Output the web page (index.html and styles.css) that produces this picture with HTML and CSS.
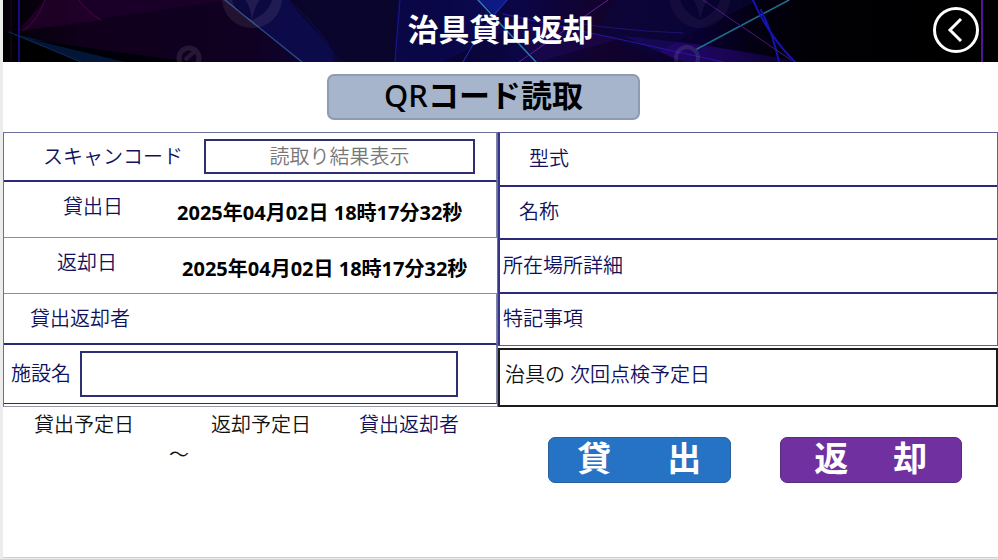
FILE: index.html
```html
<!DOCTYPE html>
<html lang="ja">
<head>
    <meta charset="UTF-8">
    <meta name="viewport" content="width=device-width, initial-scale=1.0">
    <title>治具貸出返却</title>
    <link rel="stylesheet" href="styles.css">
</head>
<body>

<div class="screen">
    <header class="header">
        <svg class="header-art" viewBox="0 0 995 62" preserveAspectRatio="none" aria-hidden="true">
            <defs>
                <linearGradient id="night" x1="0" x2="1" y1="0" y2="0">
                    <stop offset="0" stop-color="#020004"/>
                    <stop offset="0.08" stop-color="#10001c"/>
                    <stop offset="0.25" stop-color="#100022"/>
                    <stop offset="0.34" stop-color="#0b0838"/>
                    <stop offset="0.42" stop-color="#08032c"/>
                    <stop offset="0.52" stop-color="#0b0646"/>
                    <stop offset="0.6" stop-color="#12022c"/>
                    <stop offset="0.7" stop-color="#080030"/>
                    <stop offset="0.76" stop-color="#030010"/>
                    <stop offset="0.82" stop-color="#010004"/>
                    <stop offset="1" stop-color="#000000"/>
                </linearGradient>
                <linearGradient id="glow" x1="0" x2="1" y1="0" y2="0">
                    <stop offset="0" stop-color="#2c0a7c"/>
                    <stop offset="0.6" stop-color="#1e0660"/>
                    <stop offset="1" stop-color="#0a0030"/>
                </linearGradient>
            </defs>
            <rect width="995" height="62" fill="url(#night)"/>
            <path d="M15 31 L42 0 H76 L100 20 Z" fill="#26002e" opacity="0.7"/>
            <path d="M76 0 H225 L100 18 Z" fill="#1a0028"/>
            <path d="M0 31 L78 62 H0 Z" fill="#000"/>
            <path d="M8 33 L78 62 H125 Z" fill="#041638"/>
            <path d="M30 40 L150 57 L190 62 H122 Z" fill="#000008"/>
            <path d="M225 0 H285 L330 50 V62 H299 Z" fill="#0c0d50" opacity="0.8"/>
            <path d="M285 0 H395 V62 H340 Z" fill="#0a052a" opacity="0.8"/>
            <path d="M395 0 H475 L505 30 L440 62 H391 Z" fill="#0c0a58" opacity="0.6"/>
            <path d="M475 0 H505 L492 15 Z" fill="#1024a0" opacity="0.7"/>
            <path d="M500 20 L620 38 L535 62 Z" fill="#1e0850" opacity="0.6"/>
            <path d="M620 36 L700 45 L800 62 H680 Z" fill="url(#glow)" opacity="0.8"/>
            <path d="M595 34 L610 0 H755 L695 30 L650 55 Z" fill="#0a0840" opacity="0.5"/>
            <g fill="none" stroke-linecap="round">
                <path d="M8 0 V62" stroke="#24002a"/>
                <path d="M16 0 V62" stroke="#150a80" stroke-width="2"/>
                <path d="M42 0 Q34 22 20 31 M76 0 Q84 12 98 20" stroke="#7a1272" opacity="0.4"/>
                <path d="M6 32 L78 62" stroke="#0c2c54"/>
                <path d="M222 0 L299 62" stroke="#27488a" stroke-width="1.5"/>
                <path d="M285 0 Q304 15 326 45" stroke="#171278" opacity="0.6"/>
                <path d="M397 0 L392 62" stroke="#1b168c"/>
                <path d="M475 0 L533 62" stroke="#2b79b0" stroke-width="1.5"/>
                <path d="M504 0 Q480 25 460 62" stroke="#2330c0"/>
                <path d="M500 14 L620 40 L720 62" stroke="#2616a8"/>
                <path d="M516 62 L605 0" stroke="#60209a"/>
                <path d="M540 17 Q600 30 680 33" stroke="#3020a8" opacity="0.5"/>
                <path d="M694 49 L786 0" stroke="#1e6f8c" stroke-width="1.5"/>
                <path d="M750 0 Q765 35 792 62 M758 10 Q770 34 776 62" stroke="#1512b0" stroke-width="2"/>
                <path d="M700 0 L788 60" stroke="#4b1680"/>
                <path d="M979 0 V62" stroke="#50149c" stroke-width="2"/>
            </g>
            <g opacity="0.09">
                <circle cx="249" cy="-2" r="30" fill="#e0d0d0"/>
                <path d="M249 20 C232 12 228 2 228 -8 C242 -6 247 4 249 20 C252 4 258 -6 270 -8 C270 4 264 14 249 20" fill="#000"/>
                <circle cx="697" cy="-2" r="30" fill="#806070"/>
                <path d="M697 20 C680 12 676 2 676 -8 C690 -6 695 4 697 20 C700 4 706 -6 718 -8 C718 4 712 14 697 20" fill="#000"/>
                <circle cx="186" cy="58" r="10" fill="none" stroke="#fff" stroke-width="5"/>
                <path d="M182 60 L194 49" stroke="#fff" stroke-width="4"/>
                <circle cx="684" cy="58" r="11" fill="none" stroke="#fff" stroke-width="4"/>
            </g>
        </svg>
        <h1 class="title">治具貸出返却</h1>
        <button class="back" type="button" aria-label="戻る">
            <svg viewBox="0 0 48 48" aria-hidden="true">
                <circle cx="24" cy="24" r="21.5"/>
                <path d="M29 13 L18 24 L29 35"/>
            </svg>
        </button>
    </header>

    <div class="toolbar">
        <button class="scan-button" type="button"><span class="latin">QR</span>コード読取</button>
    </div>

    <main class="panels">
        <section class="panel-left">
            <div class="row row-scan">
                <label class="label" for="scanCode">スキャンコード</label>
                <input class="field scan-field" type="text" id="scanCode" placeholder="読取り結果表示">
            </div>
            <div class="row row-date row-lend">
                <span class="label">貸出日</span>
                <time class="date">2025年04月02日 18時17分32秒</time>
            </div>
            <div class="row row-date row-return">
                <span class="label">返却日</span>
                <time class="date">2025年04月02日 18時17分32秒</time>
            </div>
            <div class="row row-person">
                <span class="label">貸出返却者</span>
            </div>
            <div class="row row-facility">
                <label class="label" for="facility">施設名</label>
                <input class="field facility-field" type="text" id="facility">
            </div>
        </section>

        <section class="panel-right">
            <div class="info">
                <div class="row row-model"><span class="label">型式</span></div>
                <div class="row row-name"><span class="label">名称</span></div>
                <div class="row"><span class="label">所在場所詳細</span></div>
                <div class="row"><span class="label">特記事項</span></div>
            </div>
            <div class="inspection">
                <span class="dark">治具の</span>
                <span>次回点検予定日</span>
            </div>
        </section>
    </main>

    <footer class="footer">
        <div class="schedule">
            <div class="schedule-heads">
                <span class="dark">貸出予定日</span>
                <span class="dark">返却予定日</span>
                <span>貸出返却者</span>
            </div>
            <div class="schedule-range dark">～</div>
        </div>
        <div class="actions">
            <button class="action lend" type="button"><span>貸</span><span>出</span></button>
            <button class="action return" type="button"><span>返</span><span>却</span></button>
        </div>
    </footer>
</div>

</body>
</html>
```

FILE: styles.css
```css
* { box-sizing: border-box; }
body {
    margin: 0;
    background: #ececec;
    color: #10105c;
    font-family: "Noto Sans", "Noto Sans CJK JP", sans-serif;
    font-size: 20px;
    font-weight: 350;
    line-height: 28px;
}
button, input { font-family: inherit; }
.screen {
    display: flex;
    flex-direction: column;
    min-height: calc(100vh - 1px);
    margin-left: 3px;
    background: white;
    border-bottom: 1px solid #cfcfcf;
}
.dark { color: #111; }

/* header */
.header { position: relative; display: flex; align-items: center; justify-content: center; height: 62px; padding-bottom: 4px; background: black; }
.header-art { position: absolute; inset: 0; width: 100%; height: 100%; }
.title { position: relative; margin: 0; color: white; font-size: 31px; line-height: 44px; font-weight: 700; }
.back { position: absolute; top: 6px; right: 18px; width: 48px; height: 48px; padding: 0; border: 0; background: none; cursor: pointer; }
.back svg { display: block; width: 100%; height: 100%; fill: none; stroke: white; stroke-width: 3; }

/* QR button */
.toolbar { display: flex; justify-content: center; padding: 12px 34px 12px 0; }
.scan-button {
    width: 313px;
    height: 46px;
    padding: 0 0 4px;
    border: 2px solid #8f9bb0;
    border-radius: 7px;
    background: #a6b5cc;
    color: black;
    font-size: 31px;
    line-height: 38px;
    font-weight: 700;
}
.latin { font-weight: 500; }

/* tables */
.panels { display: grid; grid-template-columns: minmax(0, 495fr) minmax(0, 500fr); }
.row { display: flex; align-items: center; border-bottom: 2px solid #2a2a78; }
.label { white-space: nowrap; }
.panel-left { border: 1px solid #6a6f9c; border-bottom-color: #9a9aa8; padding-bottom: 2px; }
.panel-left .row { border-right: 1px solid #8084a8; }
.row-scan { height: 49px; padding-left: 39px; gap: 21px; }
.row-date .label { padding-bottom: 6px; }
.row-date .date { padding-top: 6px; }
.panel-left .row-lend { height: 56px; padding-left: 59px; gap: 54px; border-bottom: 1px solid #8a8aa4; }
.panel-left .row-return { height: 56px; padding-left: 53px; gap: 65px; border-bottom: 1px solid #8a8aa4; border-right: 0; }
.row-person { height: 51px; padding-left: 26px; }
.panel-left .row-facility { height: 59px; padding-left: 7px; gap: 9px; border-bottom-width: 1px; }
.date { color: black; font-weight: 700; white-space: nowrap; }
.field {
    flex: 1;
    min-width: 0;
    border: 2px solid #2e2e72;
    border-radius: 0;
    background: white;
    color: #10105c;
    font-size: 20px;
    font-weight: 350;
    text-align: center;
}
.field::placeholder { color: #777; opacity: 1; }
.scan-field { height: 35px; margin-right: 21px; }
.facility-field { height: 46px; margin-right: 38px; }

.panel-right { display: flex; flex-direction: column; gap: 2px; }
.info { display: flex; flex-direction: column; flex: 1; border: 1px solid #5a5f94; border-left: 2px solid #34348a; }
.info .row { flex: 1; padding-left: 3px; }
.info .row:last-child { border-bottom: 0; }
.info .row-model { padding-left: 29px; }
.info .row-name { padding-left: 19px; }
.inspection { display: flex; align-items: center; gap: 5px; height: 59px; padding: 0 5px 6px; border: 2px solid #1c1c20; }

/* schedule and buttons */
.footer { display: grid; grid-template-columns: minmax(0, 545fr) minmax(0, 450fr); }
.schedule { padding: 4px 0 0 31px; }
.schedule-heads { display: flex; }
.schedule-heads span { margin-right: 48px; white-space: nowrap; }
.schedule-heads span:first-child { margin-right: 77px; }
.schedule-range { padding: 2px 0 0 135px; }
.actions { display: flex; gap: 49px; padding: 30px 36px 0 0; }
.action {
    display: flex;
    flex: 1;
    justify-content: center;
    height: 46px;
    padding: 0;
    border: 1px solid #2a5f9e;
    border-radius: 7px;
    background: #2672c4;
    color: white;
    font-size: 34px;
    line-height: 40px;
    font-weight: 700;
}
.lend { gap: 56px; }
.return { gap: 45px; border-color: #54307c; background: #7030a0; }
```
